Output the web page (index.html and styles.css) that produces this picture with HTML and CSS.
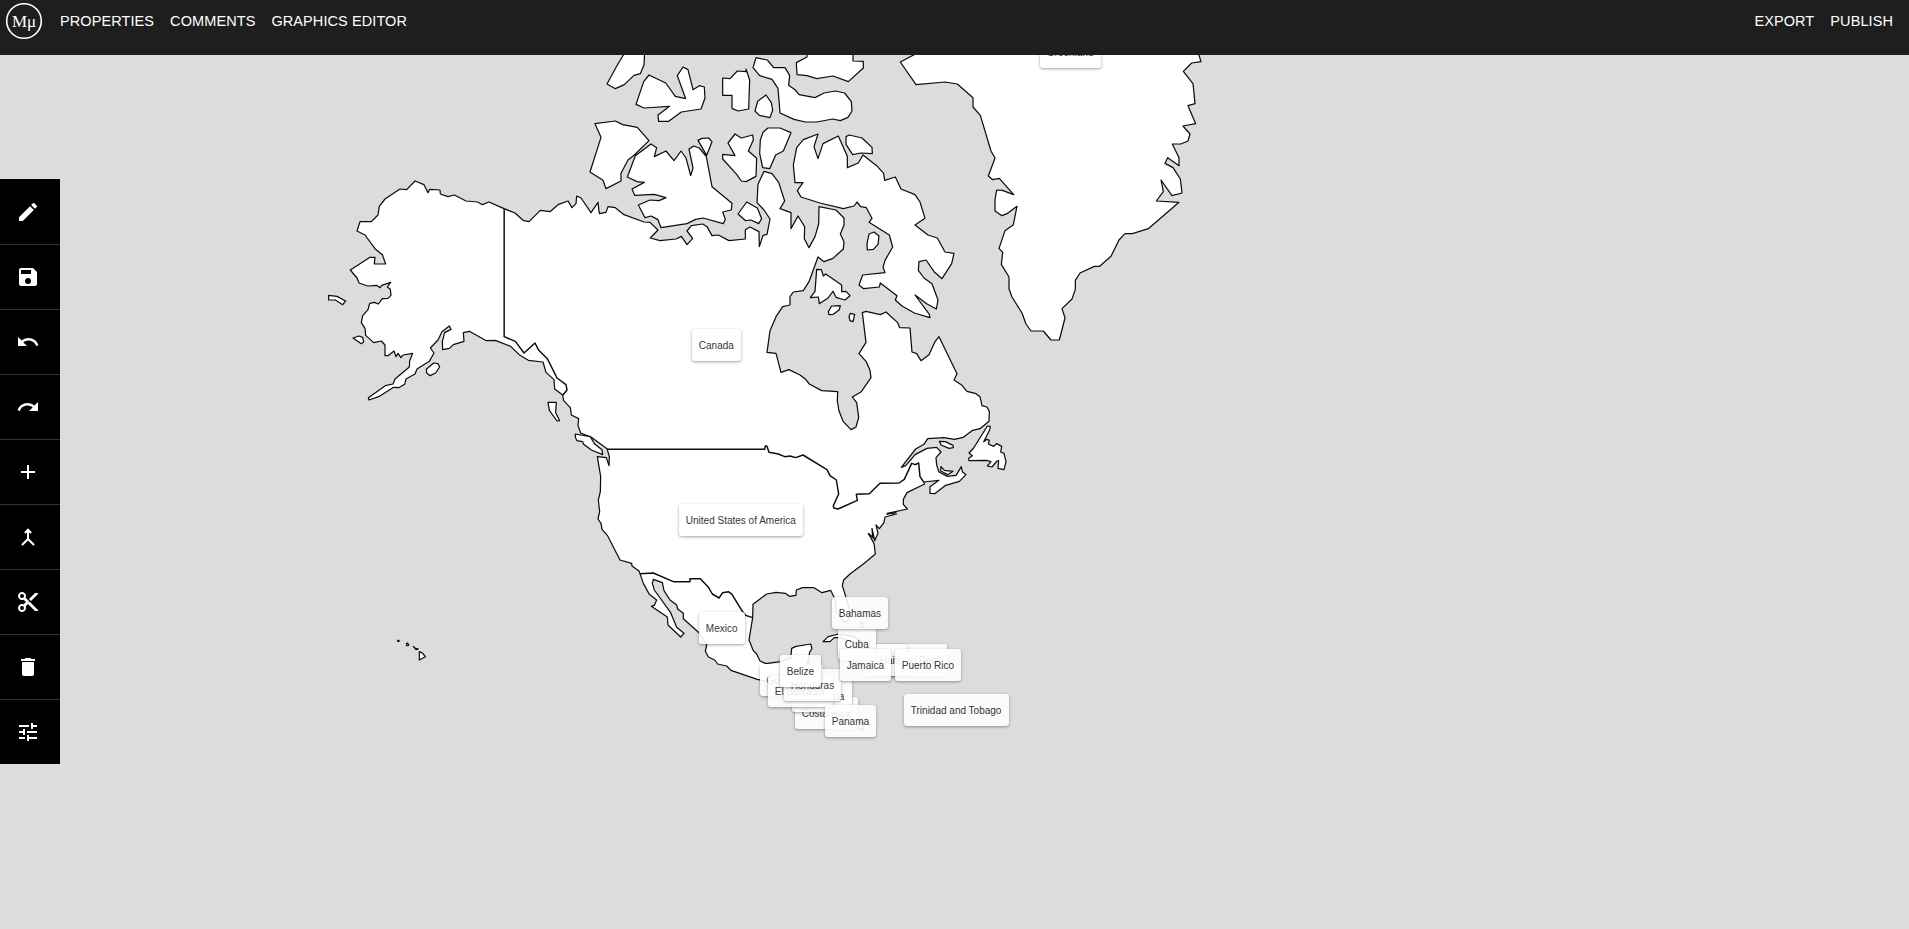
FILE: index.html
```html
<!DOCTYPE html>
<html lang="en">
<head>
<meta charset="utf-8">
<title>Map editor</title>
<link rel="stylesheet" href="styles.css">
</head>
<body>
<header class="topbar">
  <svg class="logo" viewBox="0 0 38 38"><circle cx="19" cy="19" r="17.3"/><text x="19" y="24.5">Mμ</text></svg>
  <nav class="menu"><a>PROPERTIES</a><a>COMMENTS</a><a>GRAPHICS EDITOR</a></nav>
  <nav class="menu menu-end"><a>EXPORT</a><a>PUBLISH</a></nav>
</header>
<main class="stage">
  <svg class="map" viewBox="0 165 5727 2622">
    <!-- mainland -->
    <path d="M1512 626L1545 639 1571 662 1587 665 1621 631 1650 635 1674 614 1704 603 1716 623 1728 611 1730 588 1743 594 1773 638 1794 607 1798 641 1818 637 1824 620 1846 623 1872 644 1932 666 1950 667 1974 690 1951 714 1980 722 2028 717 2044 709 2061 734 2078 715 2061 693 2074 677 2108 672 2121 680 2136 707 2155 705 2187 722 2236 717 2236 689 2250 681 2277 695 2278 740 2289 706 2301 703 2310 657 2292 630 2271 608 2274 553 2292 514 2316 521 2336 547 2354 603 2340 626 2373 638 2373 686 2394 648 2414 680 2413 716 2427 743 2445 710 2456 672 2457 620 2508 630 2532 654 2532 675 2521 702 2532 725 2530 747 2499 775 2472 785 2454 771 2427 845 2410 872 2380 876 2370 890 2370 915 2348 920 2328 950 2310 992 2301 1057 2328 1060 2343 1117 2367 1109 2400 1125 2417 1138 2428 1152 2465 1172 2513 1175 2512 1203 2517 1233 2530 1265 2553 1289 2568 1281 2576 1252 2570 1208 2557 1191 2584 1175 2613 1133 2610 1111 2598 1084 2577 1061 2598 1027 2587 938 2598 934 2641 944 2658 936 2693 968 2699 983 2730 984 2736 1056 2750 1061 2763 1082 2787 1064 2805 1025 2817 1010 2871 1121 2862 1140 2886 1156 2901 1174 2928 1181 2940 1190 2946 1217 2961 1221 2968 1234 2967 1264 2940 1286 2918 1291 2890 1312 2863 1318 2832 1313 2783 1316 2772 1333 2747 1347 2704 1402 2718 1396 2745 1364 2781 1345 2810 1342 2823 1356 2808 1373 2810 1395 2817 1416 2842 1429 2868 1426 2884 1400 2887 1415 2898 1424 2878 1444 2837 1456 2804 1481 2790 1480 2790 1460 2817 1441 2771 1446 2774 1452 2721 1478 2710 1498 2710 1513 2722 1527 2662 1540 2690 1542 2655 1551 2652 1568 2638 1586 2628 1575 2634 1600 2624 1622 2616 1585 2618 1612 2605 1600 2622 1630 2626 1662 2590 1692 2550 1722 2531 1740 2527 1757 2538 1792 2550 1835 2545 1862 2532 1865 2508 1832 2506 1800 2492 1771 2466 1778 2442 1763 2408 1763 2389 1770 2388 1786 2368 1789 2356 1780 2328 1777 2300 1782 2259 1813 2258 1853 2247 1920 2260 1952 2270 1962 2280 1983 2298 1991 2340 1985 2372 1975 2375 1945 2388 1939 2432 1932 2436 1946 2429 1956 2424 1985 2420 2030 2490 2030 2500 2140 2590 2170 2590 2190 2480 2140 2420 2070 2272 2038 2193 2011 2180 1998 2153 1992 2144 1980 2125 1971 2116 1954 2120 1935 2097 1898 2050 1856 2050 1840 2033 1827 2030 1815 2010 1800 1992 1772 1987 1748 1960 1738 1957 1750 1963 1770 2012 1838 2030 1882 2052 1900 2042 1911 2004 1875 2002 1851 1954 1819 1963 1816 1970 1800 1948 1783 1930 1750 1920 1721 1917 1713 1896 1698 1895 1690 1860 1680 1822 1606 1806 1588 1803 1570 1794 1557 1799 1535 1795 1500 1801 1475 1802 1430 1792 1370 1819 1373 1827 1397 1828 1370 1821 1346 1776 1313 1742 1299 1734 1276 1736 1256 1714 1245 1711 1223 1691 1202 1688 1185 1664 1167 1662 1139 1638 1117 1629 1086 1585 1081 1560 1066 1532 1039 1486 1021 1459 1022 1408 994 1390 998 1392 1024 1360 1034 1348 1045 1328 1049 1327 1025 1334 998 1353 988 1348 978 1326 995 1314 1020 1291 1044 1302 1059 1288 1084 1251 1107 1245 1122 1218 1137 1214 1153 1196 1163 1181 1162 1136 1190 1107 1200 1105 1193 1156 1157 1179 1152 1185 1137 1228 1101 1229 1082 1238 1060 1209 1065 1203 1073 1194 1060 1188 1070 1182 1053 1164 1067 1155 1067 1155 1035 1144 1023 1121 1028 1097 1006 1095 985 1084 968 1088 947 1104 929 1109 910 1123 907 1135 912 1147 896 1164 895 1173 886 1171 868 1162 861 1172 847 1145 856 1140 863 1130 856 1103 858 1077 849 1071 834 1051 810 1110 772 1125 772 1123 792 1157 792 1147 764 1125 746 1095 705 1071 693 1080 665 1114 665 1134 645 1138 619 1155 597 1200 567 1220 569 1245 543 1272 554 1284 578 1289 568 1320 570 1321 582 1344 590 1363 585 1398 603 1433 606 1447 614 1467 606Z"/>
    <!-- national borders -->
    <g class="border">
      <path d="M1512.5 626V1010L1546 1024 1572 1059 1605 1029 1615 1049 1642 1076 1671 1134 1698 1154 1701 1170 1688 1186"/>
      <path d="M1821 1347.500H2294L2296 1338 2301 1339 2307 1357 2335 1362 2354 1370 2370 1368 2387 1373 2409 1365 2481 1409 2490 1427 2509 1440 2516 1482 2500 1517 2501 1524 2514 1527 2572 1501 2569 1483 2608 1481 2640 1450 2697 1449 2713 1438 2735 1390 2746 1394 2756 1389 2760 1430 2771 1446"/>
      <path d="M1920 1721L1960 1719 2020 1745H2070V1736H2101L2124 1760 2137 1782 2157 1794 2168 1778 2185 1775 2196 1783 2227 1834 2237 1846 2258 1853"/>
    </g>
    <!-- Alaskan islands -->
    <g transform="translate(960 510)">
      <path d="M26 376L51 379 77 393 68 404 46 390H26ZM99 504L117 498 128 502 131 516 124 521ZM319 598L341 579 354 581 359 591 347 609 330 617 320 609Z"/>
    </g>
    <!-- Pacific coast islands -->
    <g transform="translate(1590 930)">
      <path d="M54 277H79L77 308 89 332 81 333 58 301ZM136 372L181 380 194 402 216 419 218 434 184 420 160 402 158 395 141 392 136 382Z"/>
    </g>
    <!-- Arctic archipelago -->
    <g transform="translate(1710 150)">
      <path d="M166 5L142 45 111 102 136 116 163 104 192 76 211 71 222 45 224 5ZM237 75L287 99 316 139 347 146 322 77 339 51 354 59 369 119 388 107 403 111 405 144 393 177 334 186 296 214H266L264 195 299 169 222 174 198 163 221 95ZM458 84L480 86 502 63 528 65V57L539 90 536 177 504 183 486 175V136H458ZM588 135L604 158 608 180 600 203 568 196 555 183 563 154ZM558 23L592 30 611 53H645L659 76 656 106 677 121 687 134 735 143 762 129 796 123 824 129 844 155 846 183 834 202 811 212 788 207 740 216H706L672 208 630 189 624 115 606 88 569 77 549 53ZM711 0V21L679 38 681 74 711 77 740 86 789 78 835 95 880 54V34L849 33V0Z"/>
      <path d="M75 221L136 213 158 224 202 232 237 272 193 315 174 330 153 370V393L108 416 99 391 60 366 93 262ZM243 282L260 293 253 320 288 303 312 332 333 303 348 324 362 377 369 354 357 297 371 288 388 294 409 320 426 410 486 460 484 480 458 486 466 508 460 521 399 504 377 508 351 521 273 533 264 509 243 498 225 503 205 465 240 450 267 452 288 443 253 433 194 436 186 417 223 397 201 395 172 381 196 317ZM384 271L396 265 416 264 426 275 410 316ZM495 252L514 264 548 255 550 270 535 303 560 325 558 379 528 395 514 393 500 373 458 327V313L495 317 474 279ZM594 234H630L663 248 640 303 617 315 599 356 578 353 569 310 571 270 579 247ZM530 456L562 474 575 506 566 521 543 510 527 512 504 492Z"/>
    </g>
    <g transform="translate(2340 360)">
      <path d="M114 42L70 59 50 83 40 135 45 188H69L52 212 63 231 120 249 190 266 222 258 231 246 242 260 259 263 276 295 267 307 328 345 338 381 315 421 309 442 315 458 248 465 237 495 251 506 298 501 301 489 351 527 346 540 366 558 403 579 450 593 448 583 405 525 440 551 469 567 474 540 456 491 432 474 415 451 417 425 438 420 464 457 486 476 515 431 522 400 495 396 472 354 444 345 405 315 435 295 420 246 405 224 363 207 346 171 314 181 311 160 290 137 249 105 235 129 202 143V109L175 48 129 71 114 116 102 80ZM208 45L246 54 276 82 277 101 242 99 218 104 198 73V50ZM267 342L282 336 297 348 294 373 280 388 262 390 261 371ZM110 448L124 449 130 468 137 462 185 495V515L198 514 210 527 195 540 168 532 159 514 144 534 118 551 115 531 91 533 105 514ZM155 558L181 557 178 569 160 583 147 584 145 575ZM211 580L224 583 219 605 210 602 207 590Z"/>
    </g>
    <!-- Greenland -->
    <g transform="translate(2670 150)">
      <path d="M80 10L31 36 78 104 165 96 202 102 249 143V171L271 196 303 303 315 324 295 378 308 389 328 385 371 434 337 421 320 420 315 449V483L336 497 351 491 381 469 370 524 345 542 327 595 338 607 334 643 357 681V716L366 741 396 789 408 822 423 843H460L483 870H508L525 804 516 776 546 747 556 718V691L570 669 613 649H629L663 619 687 570 705 551H727L775 536 867 457 799 453 820 425 813 390 846 437 876 429 871 387 849 353 825 340 833 323 867 347V323L847 282H872L894 273 900 252 879 228 917 221 894 167 915 161 909 101 880 64 905 39 933 35 924 5Z"/>
    </g>
    <!-- Gulf of St. Lawrence and Newfoundland -->
    <g transform="translate(2250 900)">
      <path d="M712 378L721 379 719 390 701 425 711 418 718 421 715 432 731 439 740 431 755 439 752 456 762 460 768 485 762 509 744 505 746 482 741 483 726 501 712 498 723 485 709 481 657 482 656 475 667 467 657 459 671 444ZM568 424L586 425 609 436 610 443 597 445 573 435ZM573 500L583 511 609 514 593 524 572 513Z"/>
      <path class="border" d="M409 643L440 636M355 700L376 719"/>
    </g>
    <!-- Cuba, Bahamas -->
    <g transform="translate(2220 1740)">
      <path d="M249 185L265 170 295 162 340 170 375 190 360 195 300 173 283 173 270 185ZM362 125L372 132 370 145 362 140Z"/>
    </g>
    <!-- Hawaii -->
    <g transform="translate(1140 1800)">
      <path d="M53 121H57V124H53ZM79 132L83 129 86 136 80 137ZM100 139L105 144 115 147 108 149ZM118 155L127 159 136 170 118 180Z"/>
    </g>
  </svg>
  <div class="labels">
    <span style="left:1039.5px;top:-19px">Greenland</span>
    <span style="left:691.5px;top:273.5px">Canada</span>
    <span style="left:678.5px;top:448.5px">United States of America</span>
    <span style="left:698.5px;top:556.5px">Mexico</span>
    <span style="left:759.5px;top:609px">Guatemala</span>
    <span style="left:794.5px;top:642px">Costa Rica</span>
    <span style="left:791.5px;top:625px">Nicaragua</span>
    <span style="left:767.5px;top:620px">El Salvador</span>
    <span style="left:783.5px;top:614px">Honduras</span>
    <span style="left:779.5px;top:600px">Belize</span>
    <span style="left:824.5px;top:650px">Panama</span>
    <span style="left:861.5px;top:589px">Dominican Rep.</span>
    <span style="left:872.5px;top:589px">Haiti</span>
    <span style="left:837.5px;top:573px">Cuba</span>
    <span style="left:831.5px;top:542px">Bahamas</span>
    <span style="left:839.5px;top:594px">Jamaica</span>
    <span style="left:894.5px;top:594px">Puerto Rico</span>
    <span style="left:903.5px;top:639px">Trinidad and Tobago</span>
  </div>
  <aside class="tools">
    <button><svg viewBox="0 0 24 24"><path d="M3 17.25V21h3.75L17.81 9.94l-3.75-3.75zM20.71 7.04a1 1 0 0 0 0-1.41l-2.34-2.34a1 1 0 0 0-1.41 0l-1.83 1.83 3.75 3.75z"/></svg></button>
    <button><svg viewBox="0 0 24 24"><path d="M17 3H5a2 2 0 0 0-2 2v14a2 2 0 0 0 2 2h14c1.1 0 2-.9 2-2V7zm-5 16a3 3 0 1 1 0-6 3 3 0 0 1 0 6zm3-10H5V5h10z"/></svg></button>
    <button><svg viewBox="0 0 24 24"><path d="M12.5 8c-2.65 0-5.05.99-6.9 2.6L2 7v9h9l-3.62-3.62c1.39-1.16 3.16-1.88 5.12-1.88 3.54 0 6.55 2.31 7.6 5.5l2.37-.78C21.08 11.03 17.15 8 12.5 8z"/></svg></button>
    <button><svg viewBox="0 0 24 24"><path d="M18.4 10.6C16.55 8.99 14.15 8 11.5 8c-4.65 0-8.58 3.03-9.96 7.22L3.9 16c1.05-3.19 4.05-5.5 7.6-5.5 1.95 0 3.73.72 5.12 1.88L13 16h9V7z"/></svg></button>
    <button><svg viewBox="0 0 24 24"><path d="M19 13h-6v6h-2v-6H5v-2h6V5h2v6h6z"/></svg></button>
    <button><svg viewBox="0 0 24 24"><path class="line" d="M12 5v9l-6 6M12 14l6 6M8.900 8L12 4.700 15.100 8"/></svg></button>
    <button><svg viewBox="0 0 24 24"><path d="M9.64 7.64c.23-.5.36-1.05.36-1.64 0-2.21-1.79-4-4-4S2 3.79 2 6s1.79 4 4 4c.59 0 1.14-.13 1.64-.36L10 12l-2.36 2.36C7.14 14.13 6.59 14 6 14c-2.21 0-4 1.79-4 4s1.79 4 4 4 4-1.79 4-4c0-.59-.13-1.14-.36-1.64L12 14l7 7h3v-1zM6 8a2 2 0 1 1 0-4 2 2 0 0 1 0 4zm0 12a2 2 0 1 1 0-4 2 2 0 0 1 0 4zm6-7.5a.5.5 0 1 1 0-1 .5.5 0 0 1 0 1zM19 3l-6 6 2 2 7-7V3z"/></svg></button>
    <button><svg viewBox="0 0 24 24"><path d="M6 19c0 1.1.9 2 2 2h8c1.1 0 2-.9 2-2V7H6zM19 4h-3.5l-1-1h-5l-1 1H5v2h14z"/></svg></button>
    <button><svg viewBox="0 0 24 24"><path d="M3 17v2h6v-2zM3 5v2h10V5zm10 16v-2h8v-2h-8v-2h-2v6zM7 9v2H3v2h4v2h2V9zm14 4v-2H11v2zm-6-4h2V7h4V5h-4V3h-2z"/></svg></button>
  </aside>
</main>
</body>
</html>
```
FILE: styles.css
```css
* { box-sizing: border-box; }
body {
  margin: 0;
  height: 929px;
  overflow: hidden;
  display: flex;
  flex-direction: column;
  font-family: "Liberation Sans", Arial, sans-serif;
}
.topbar {
  flex: none;
  display: flex;
  align-items: flex-start;
  height: 55px;
  padding: 2px 16px 0 5px;
  background: #1e1e1e;
}
.logo { width: 38px; height: 38px; }
.logo circle { fill: none; stroke: #fff; stroke-width: 1.6; }
.logo text {
  fill: #fff;
  font: 17px "Liberation Serif", serif;
  text-anchor: middle;
}
.menu {
  display: flex;
  gap: 16px;
  margin-left: 17px;
  padding-top: 10px;
  color: #fff;
  font-size: 14.5px;
  letter-spacing: .09px;
  line-height: 18px;
}
.menu-end { margin-left: auto; }
.stage {
  flex: 1;
  position: relative;
  overflow: hidden;
  background: #dcdcdc;
}
.map { display: block; width: 1909px; height: 874px; }
.map path {
  fill: #fff;
  stroke: #0c0c0c;
  stroke-width: 3.7;
  stroke-linejoin: round;
}
.map .border, .map .border path { fill: none; }
.map .border path { stroke-width: 4.4; }
.labels span {
  position: absolute;
  height: 32px;
  padding: 0 7.3px;
  border-radius: 3px;
  background: #fff;
  box-shadow: 0 1px 3px rgba(0, 0, 0, .4);
  opacity: .9;
  color: #222;
  font-size: 10px;
  line-height: 33px;
  white-space: nowrap;
}
.tools {
  position: absolute;
  left: 0;
  top: 124px;
  width: 60px;
  display: flex;
  flex-direction: column;
  background: #000;
}
.tools button {
  display: flex;
  align-items: center;
  height: 65px;
  padding: 0 0 0 16px;
  border: 0;
  border-top: 1px solid #333;
  background: #000;
}
.tools button:first-child { border-top-color: #000; }
.tools svg { width: 24px; height: 24px; fill: #fff; }
.tools .line { fill: none; stroke: #fff; stroke-width: 2; }
```
